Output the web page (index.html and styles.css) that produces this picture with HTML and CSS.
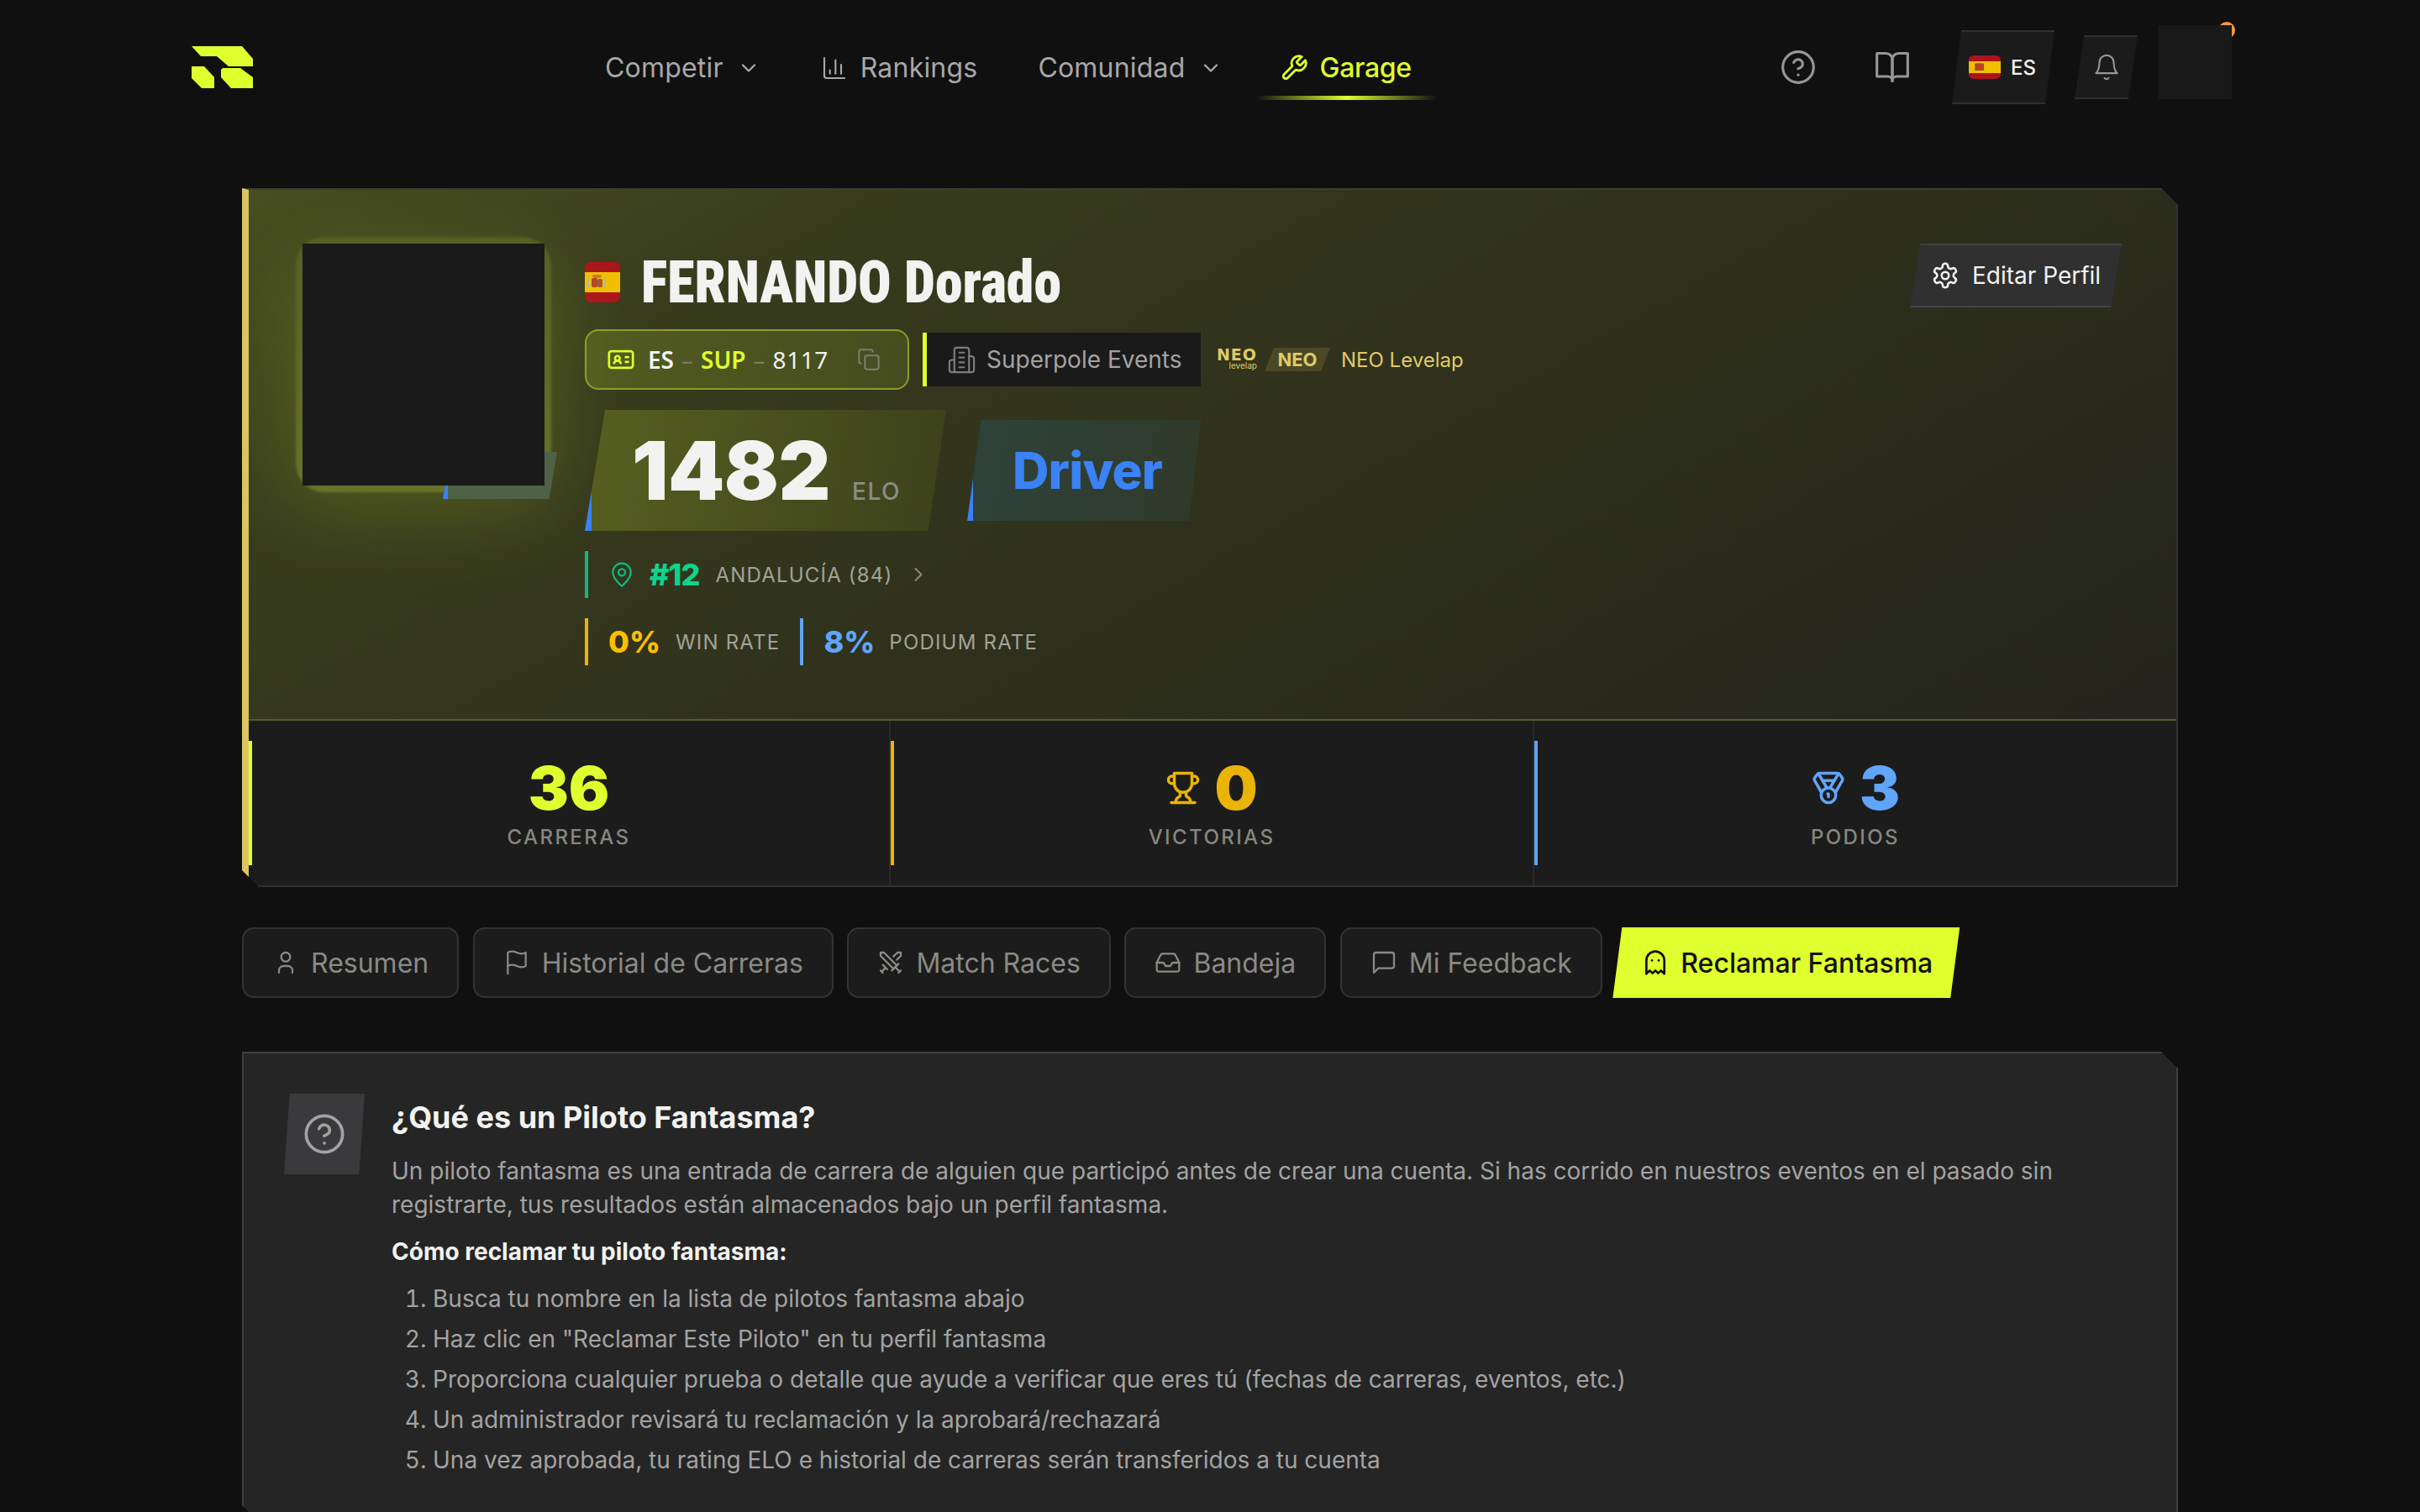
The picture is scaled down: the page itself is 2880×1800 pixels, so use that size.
FILE: index.html
```html
<!DOCTYPE html>
<html lang="es">
<head>
<meta charset="utf-8">
<title>Garage</title>
<link rel="stylesheet" href="styles.css">
</head>
<body>
<header class="topbar">
  <a class="logo" href="#">
    <svg viewBox="0 0 80 60" width="80" height="60"><path fill="#dfff2e" d="M4 5H64L77 20V29H48L34 17H15Z"/><path fill="#dfff2e" d="M41 31H62L77 42V55H51L39 42V33Z"/><path fill="#dfff2e" d="M4 29H19L31 42V55H16L4 43Z"/></svg>
  </a>
  <nav class="nav">
    <a class="nav-item" href="#">Competir<svg class="chev" viewBox="0 0 24 24"><path d="m6 9 6 6 6-6"/></svg></a>
    <a class="nav-item" href="#"><svg class="ico nav-ico" viewBox="0 0 24 24"><path d="M3 3v16a2 2 0 0 0 2 2h16"/><path d="M18 17V9"/><path d="M13 17V5"/><path d="M8 17v-3"/></svg>Rankings</a>
    <a class="nav-item" href="#">Comunidad<svg class="chev" viewBox="0 0 24 24"><path d="m6 9 6 6 6-6"/></svg></a>
    <a class="nav-item is-active" href="#"><svg class="ico nav-ico" viewBox="0 0 24 24"><path d="M14.7 6.3a1 1 0 0 0 0 1.4l1.6 1.6a1 1 0 0 0 1.4 0l3.77-3.77a6 6 0 0 1-7.94 7.94l-6.91 6.91a2.12 2.12 0 0 1-3-3l6.91-6.91a6 6 0 0 1 7.94-7.94l-3.76 3.76z"/></svg>Garage</a>
  </nav>
  <div class="tools">
    <svg class="ico tool-ico" viewBox="0 0 24 24"><circle cx="12" cy="12" r="10"/><path d="M9.09 9a3 3 0 0 1 5.83 1c0 2-3 3-3 3"/><path d="M12 17h.01"/></svg>
    <svg class="ico tool-ico book" viewBox="0 0 24 24"><path d="M2 3h6a4 4 0 0 1 4 4v14a3 3 0 0 0-3-3H2z"/><path d="M22 3h-6a4 4 0 0 0-4 4v14a3 3 0 0 1 3-3h7z"/></svg>
    <div class="lang"><svg class="lang-flag" viewBox="0 0 42 48" preserveAspectRatio="none"><rect width="42" height="48" rx="8" fill="#aa151b"/><rect y="12" width="42" height="24" fill="#f1bf00"/><rect x="8" y="16" width="12" height="15" rx="2" fill="#b5452a"/></svg><span>ES</span></div>
    <div class="bell"><svg class="ico bell-ico" viewBox="0 0 24 24"><path d="M6 8a6 6 0 0 1 12 0c0 7 3 9 3 9H3s3-2 3-9"/><path d="M10.3 21a1.94 1.94 0 0 0 3.4 0"/></svg></div>
    <div class="me"><span class="me-dot"></span><span class="me-pic"></span></div>
  </div>
</header>

<main class="page">
  <section class="hero">
    <div class="hero-top">
      <div class="portrait">
        <span class="portrait-frame"></span>
        <span class="portrait-tag"></span>
        <span class="portrait-pic"></span>
      </div>
      <div class="identity">
        <div class="name-row">
          <svg class="name-flag" viewBox="0 0 42 48">
            <rect width="42" height="48" rx="7" fill="#aa151b"/>
            <rect y="12" width="42" height="24" fill="#f1bf00"/>
            <rect x="8" y="19" width="7" height="11" rx="2" fill="#b5452a"/>
            <rect x="15" y="20" width="6" height="10" rx="2" fill="#a8552f"/>
            <rect x="9" y="15" width="11" height="4" rx="2" fill="#c8783a"/>
            <rect x="3" y="19" width="2" height="11" fill="#b9b49a"/>
            <rect x="23" y="19" width="2" height="11" fill="#b9b49a"/>
          </svg>
          <h1 class="name">FERNANDO Dorado</h1>
        </div>
        <div class="id-row">
          <div class="license">
            <svg class="ico id-ico" viewBox="0 0 24 24"><path d="M16 10h2"/><path d="M16 14h2"/><path d="M6.17 15a3 3 0 0 1 5.66 0"/><circle cx="9" cy="11" r="2"/><rect x="2" y="5" width="20" height="14" rx="2"/></svg>
            <span class="lic-a">ES</span><span class="lic-sep">–</span><span class="lic-b">SUP</span><span class="lic-sep">–</span><span class="lic-c">8117</span>
            <svg class="ico copy-ico" viewBox="0 0 24 24"><rect x="8" y="8" width="14" height="14" rx="2"/><path d="M4 16c-1.1 0-2-.9-2-2V4c0-1.1.9-2 2-2h10c1.1 0 2 .9 2 2"/></svg>
          </div>
          <div class="club">
            <svg class="ico club-ico" viewBox="0 0 24 24"><path d="M6 22V4a2 2 0 0 1 2-2h8a2 2 0 0 1 2 2v18Z"/><path d="M6 12H4a2 2 0 0 0-2 2v6a2 2 0 0 0 2 2h2"/><path d="M18 9h2a2 2 0 0 1 2 2v9a2 2 0 0 1-2 2h-2"/><path d="M10 6h4"/><path d="M10 10h4"/><path d="M10 14h4"/><path d="M10 18h4"/></svg>
            Superpole Events
          </div>
          <div class="neo">
            <span class="neo-logo"><b>NEO</b><i>levelap</i></span>
            <span class="neo-tag">NEO</span>
            <span class="neo-name">NEO Levelap</span>
          </div>
        </div>
        <div class="rating-row">
          <div class="elo"><span class="elo-num">1482</span><span class="elo-lbl">ELO</span></div>
          <div class="tier">Driver</div>
        </div>
        <div class="region">
          <svg class="ico pin" viewBox="0 0 24 24"><path d="M20 10c0 4.993-5.539 10.193-7.399 11.799a1 1 0 0 1-1.202 0C9.539 20.193 4 14.993 4 10a8 8 0 0 1 16 0"/><circle cx="12" cy="10" r="3"/></svg>
          <b>#12</b><span class="cap">ANDALUCÍA (84)</span>
          <svg class="ico region-chev" viewBox="0 0 24 24"><path d="m9 18 6-6-6-6"/></svg>
        </div>
        <div class="rates">
          <div class="rate rate-win"><b>0%</b><span class="cap">WIN RATE</span></div>
          <div class="rate rate-pod"><b>8%</b><span class="cap">PODIUM RATE</span></div>
        </div>
      </div>
      <a class="edit" href="#">
        <svg class="ico edit-ico" viewBox="0 0 24 24"><path d="M12.22 2h-.44a2 2 0 0 0-2 2v.18a2 2 0 0 1-1 1.73l-.43.25a2 2 0 0 1-2 0l-.15-.08a2 2 0 0 0-2.73.73l-.22.38a2 2 0 0 0 .73 2.73l.15.1a2 2 0 0 1 1 1.72v.51a2 2 0 0 1-1 1.74l-.15.09a2 2 0 0 0-.73 2.73l.22.38a2 2 0 0 0 2.73.73l.15-.08a2 2 0 0 1 2 0l.43.25a2 2 0 0 1 1 1.73V20a2 2 0 0 0 2 2h.44a2 2 0 0 0 2-2v-.18a2 2 0 0 1 1-1.73l.43-.25a2 2 0 0 1 2 0l.15.08a2 2 0 0 0 2.73-.73l.22-.39a2 2 0 0 0-.73-2.73l-.15-.08a2 2 0 0 1-1-1.74v-.5a2 2 0 0 1 1-1.74l.15-.09a2 2 0 0 0 .73-2.73l-.22-.38a2 2 0 0 0-2.73-.73l-.15.08a2 2 0 0 1-2 0l-.43-.25a2 2 0 0 1-1-1.73V4a2 2 0 0 0-2-2z"/><circle cx="12" cy="12" r="3"/></svg>
        Editar Perfil
      </a>
    </div>
    <div class="stats">
      <div class="stat stat-lime">
        <div class="stat-val">36</div>
        <div class="stat-lbl">CARRERAS</div>
      </div>
      <div class="stat stat-gold">
        <div class="stat-val"><svg class="ico stat-ico" viewBox="0 0 24 24"><path d="M6 9H4.5a2.5 2.5 0 0 1 0-5H6"/><path d="M18 9h1.5a2.5 2.5 0 0 0 0-5H18"/><path d="M4 22h16"/><path d="M10 14.66V17c0 .55-.47.98-.97 1.21C7.85 18.75 7 20.24 7 22"/><path d="M14 14.66V17c0 .55.47.98.97 1.21C16.15 18.75 17 20.24 17 22"/><path d="M18 2H6v7a6 6 0 0 0 12 0V2Z"/></svg>0</div>
        <div class="stat-lbl">VICTORIAS</div>
      </div>
      <div class="stat stat-blue">
        <div class="stat-val"><svg class="ico stat-ico" viewBox="0 0 24 24"><path d="M7.21 15 2.66 7.14a2 2 0 0 1 .13-2.2L4.4 2.8A2 2 0 0 1 6 2h12a2 2 0 0 1 1.6.8l1.6 2.14a2 2 0 0 1 .14 2.2L16.79 15"/><path d="M11 12 5.12 2.2"/><path d="m13 12 5.88-9.8"/><path d="M8 7h8"/><circle cx="12" cy="17" r="5"/><path d="M12 18v-2h-.5"/></svg>3</div>
        <div class="stat-lbl">PODIOS</div>
      </div>
    </div>
  </section>

  <nav class="tabs">
    <a class="tab" href="#"><svg class="ico tab-ico" viewBox="0 0 24 24"><circle cx="12" cy="7" r="4"/><path d="M6 21v-2a4 4 0 0 1 4-4h4a4 4 0 0 1 4 4v2"/></svg>Resumen</a>
    <a class="tab" href="#"><svg class="ico tab-ico" viewBox="0 0 24 24"><path d="M4 15s1-1 4-1 5 2 8 2 4-1 4-1V3s-1 1-4 1-5-2-8-2-4 1-4 1z"/><path d="M4 22v-7"/></svg>Historial de Carreras</a>
    <a class="tab" href="#"><svg class="ico tab-ico" viewBox="0 0 24 24"><path d="M14.5 17.5 3 6V3h3l11.5 11.5"/><path d="m13 19 6-6"/><path d="m16 16 4 4"/><path d="m19 21 2-2"/><path d="M14.5 6.5 18 3h3v3l-3.5 3.5"/><path d="m5 14 4 4"/><path d="m7 17-3 3"/><path d="m3 19 2 2"/></svg>Match Races</a>
    <a class="tab" href="#"><svg class="ico tab-ico" viewBox="0 0 24 24"><path d="M22 12h-6l-2 3h-4l-2-3H2"/><path d="M5.45 5.11 2 12v6a2 2 0 0 0 2 2h16a2 2 0 0 0 2-2v-6l-3.45-6.89A2 2 0 0 0 16.76 4H7.24a2 2 0 0 0-1.79 1.11z"/></svg>Bandeja</a>
    <a class="tab" href="#"><svg class="ico tab-ico" viewBox="0 0 24 24"><path d="M21 15a2 2 0 0 1-2 2H7l-4 4V5a2 2 0 0 1 2-2h14a2 2 0 0 1 2 2z"/></svg>Mi Feedback</a>
    <a class="tab tab-on" href="#"><svg class="ico tab-ico" viewBox="0 0 24 24"><path d="M9 10h.01"/><path d="M15 10h.01"/><path d="M12 2a8 8 0 0 0-8 8v12l3-3 2.5 2.5L12 19l2.5 2.5L17 19l3 3V10a8 8 0 0 0-8-8z"/></svg>Reclamar Fantasma</a>
  </nav>

  <section class="info">
    <div class="info-badge"><svg class="ico info-ico" viewBox="0 0 24 24"><circle cx="12" cy="12" r="10"/><path d="M9.09 9a3 3 0 0 1 5.83 1c0 2-3 3-3 3"/><path d="M12 17h.01"/></svg></div>
    <div class="info-body">
      <h2 class="info-title">¿Qué es un Piloto Fantasma?</h2>
      <p class="info-text">Un piloto fantasma es una entrada de carrera de alguien que participó antes de crear una cuenta. Si has corrido en nuestros eventos en el pasado sin registrarte, tus resultados están almacenados bajo un perfil fantasma.</p>
      <p class="info-sub">Cómo reclamar tu piloto fantasma:</p>
      <ol class="info-list">
        <li>Busca tu nombre en la lista de pilotos fantasma abajo</li>
        <li>Haz clic en "Reclamar Este Piloto" en tu perfil fantasma</li>
        <li>Proporciona cualquier prueba o detalle que ayude a verificar que eres tú (fechas de carreras, eventos, etc.)</li>
        <li>Un administrador revisará tu reclamación y la aprobará/rechazará</li>
        <li>Una vez aprobada, tu rating ELO e historial de carreras serán transferidos a tu cuenta</li>
      </ol>
    </div>
  </section>
</main>
</body>
</html>
```
FILE: styles.css
```css
* { box-sizing: border-box; }
html, body { margin: 0; padding: 0; background: #101010; }
body { font-family: Inter, "Liberation Sans", sans-serif; color: #f2f2f0; }
a { color: inherit; text-decoration: none; }
h1, h2, p { margin: 0; }

.ico { fill: none; stroke: currentColor; stroke-width: 2; stroke-linecap: round; stroke-linejoin: round; flex: none; display: block; }

/* top bar */
.topbar { height: 160px; padding: 0 224px; display: flex; align-items: center; }
.logo { display: block; width: 80px; height: 60px; margin-right: 416px; }
.logo svg { display: block; }
.nav { display: flex; align-items: center; gap: 72px; font-size: 32px; letter-spacing: .2px; color: #a8a8a8; padding-top: 2px; }
.nav-item { position: relative; display: flex; align-items: center; height: 64px; line-height: 64px; }
.chev { width: 28px; height: 28px; margin-left: 16px; fill: none; stroke: currentColor; stroke-width: 2; stroke-linecap: round; stroke-linejoin: round; }
.nav-ico { width: 32px; height: 32px; margin-right: 15px; stroke-width: 1.6; }
.nav-item.is-active { color: #dfff2e; font-weight: 500; letter-spacing: -.3px; margin-left: -4px; }
.nav-item.is-active .nav-ico { width: 34px; height: 34px; margin-right: 14px; stroke-width: 2; }
.nav-item.is-active::after { content: ""; position: absolute; left: -28px; right: -30px; bottom: -6px; height: 5px; background: linear-gradient(90deg, transparent, #dfff2e 50%, transparent); }

.tools { margin-left: auto; display: flex; align-items: center; color: #969696; }
.tool-ico { width: 44px; height: 44px; stroke-width: 1.7; margin-right: 68px; }
.tool-ico.book { margin-right: 49px; }
.lang { width: 122px; height: 88px; display: flex; align-items: center; gap: 12px; padding-left: 20px; background: #1b1b1b; border-top: 2px solid #303030; border-bottom: 2px solid #303030; clip-path: polygon(9% 0, 100% 0, 91% 100%, 0 100%); color: #f2f2f0; font-size: 24px; font-weight: 500; margin-right: 24px; }
.lang-flag { width: 38px; height: 28px; flex: none; }
.bell { width: 75px; height: 76px; display: flex; align-items: center; justify-content: center; background: #1b1b1b; border-top: 2px solid #303030; border-bottom: 2px solid #303030; clip-path: polygon(15% 0, 100% 0, 85% 100%, 0 100%); margin-right: 24px; }
.bell-ico { width: 34px; height: 34px; stroke-width: 1.5; }
.me { position: relative; width: 88px; height: 88px; margin-top: -12px; }
.me-pic { position: absolute; inset: 0; background: #191919; }
.me-dot { position: absolute; right: -4px; top: -4px; width: 20px; height: 20px; border-radius: 50%; background: #f59842; }

/* page */
.page { padding: 64px 288px 0; }

/* hero */
.hero { background: #1c1c1c; border-top: 2px solid #3b3e2e; border-right: 2px solid #333; border-bottom: 2px solid #333; border-left: 8px solid #dcc462; clip-path: polygon(0 0, calc(100% - 20px) 0, 100% 20px, 100% 100%, 20px 100%, 0 calc(100% - 20px)); }
.hero-top { display: flex; align-items: flex-start; padding: 64px 65px 64px 64px; background: linear-gradient(150deg, #474e20 0%, #383c1d 22%, #2f311c 52%, #24241c 100%); border-bottom: 2px solid #565b32; height: 632px; }

.portrait { position: relative; width: 288px; height: 288px; flex: none; margin-right: 48px; }
.portrait-glow { display: none; }
.portrait::before { content: ""; position: absolute; left: -20px; right: -20px; top: 20px; bottom: -40px; border-radius: 60px; background: rgba(223, 255, 46, .14); filter: blur(45px); }
.portrait-frame { position: absolute; left: -8px; right: -8px; top: -8px; bottom: -8px; border-radius: 34px; background: linear-gradient(180deg, #565f22, #68722a); filter: blur(1.5px); }
.portrait-tag { position: absolute; left: 167px; width: 136px; top: 248px; height: 56px; background: #4f6248; clip-path: polygon(7% 0, 100% 0, 93% 100%, 0 100%); border-left: 6px solid #3b82f6; }
.portrait-pic { position: absolute; inset: 0; background: #1a1a1a; }

.identity { flex: 1; display: flex; flex-direction: column; gap: 24px; padding-top: 10px; min-width: 0; }
.name-row { height: 68px; display: flex; align-items: center; gap: 25px; }
.name-flag { width: 42px; height: 48px; flex: none; margin-top: 4px; }
.name { font-family: "Roboto Condensed", "Liberation Sans Narrow", Roboto, sans-serif; font-size: 70px; font-weight: 900; line-height: 70px; padding-top: 4px; color: #f2f2f0; transform: scaleX(.94); transform-origin: left center; white-space: nowrap; }

.id-row { height: 72px; display: flex; align-items: center; }
.license { width: 386px; height: 72px; display: flex; align-items: center; padding-left: 24px; border: 2px solid #8c9c2c; border-radius: 16px; background: linear-gradient(100deg, #525c20, #454c1f); font-family: "Noto Sans", sans-serif; font-size: 28px; font-weight: 600; margin-right: 16px; }
.id-ico { width: 34px; height: 34px; color: #dfff2e; margin-right: 15px; stroke-width: 1.9; }
.lic-sep { color: #7a7a6a; margin: 0 9px; font-weight: 400; }
.lic-b { color: #dfff2e; }
.lic-c { font-weight: 400; letter-spacing: .5px; }
.copy-ico { width: 28px; height: 28px; margin-left: 34px; color: #7c7f70; stroke-width: 1.7; }
.club { height: 64px; width: 331px; display: flex; align-items: center; gap: 12px; padding-left: 24px; background: #1a1a1a; border-left: 5px solid #dfff2e; font-size: 28px; color: #a3a3a3; margin-right: 17px; }
.club-ico { width: 35px; height: 35px; color: #7c7c7c; stroke-width: 1.5; }
.neo { display: flex; align-items: center; color: #e0c968; }
.neo-logo { display: flex; flex-direction: column; align-items: flex-end; width: 50px; margin-right: 9px; line-height: 1; }
.neo-logo b { font-family: "DejaVu Sans", sans-serif; font-size: 19px; font-weight: 700; letter-spacing: 1px; line-height: 15px; }
.neo-logo i { font-style: normal; font-size: 10px; line-height: 11px; }
.neo-tag { width: 78px; height: 28px; margin-right: 13px; display: flex; align-items: center; justify-content: center; font-size: 22px; font-weight: 700; background: #4a4826; clip-path: polygon(14% 0, 100% 0, 86% 100%, 0 100%); }
.neo-name { font-size: 24px; }

.rating-row { display: flex; align-items: center; gap: 25px; }
.elo { width: 430px; height: 144px; display: flex; align-items: flex-end; padding: 0 0 32px 48px; border-left: 8px solid #3b82f6; background: linear-gradient(100deg, #565f20, #3c411c); clip-path: polygon(5.6% 0, 100% 0, 95% 100%, 0 100%); }
.elo-num { font-size: 96px; font-weight: 900; line-height: 80px; letter-spacing: -.5px; color: #f2f2f0; }
.elo-lbl { font-size: 28px; font-weight: 500; line-height: 30px; letter-spacing: 1.5px; color: #8c8c84; margin-left: 26px; }
.tier { width: 278px; height: 120px; display: flex; align-items: center; padding-left: 47px; border-left: 7px solid #3b82f6; background: linear-gradient(100deg, #2f423a, #303a2a); clip-path: polygon(6% 0, 100% 0, 95% 100%, 0 100%); font-size: 60px; font-weight: 800; letter-spacing: -.8px; color: #3b82f6; }

.cap { font-size: 24px; letter-spacing: 1.2px; color: #a3a398; }
.region { height: 56px; display: flex; align-items: center; border-left: 4px solid #10b981; padding-left: 24px; }
.pin { width: 32px; height: 32px; color: #10b981; stroke-width: 1.7; margin-right: 17px; }
.region b { font-size: 36px; font-weight: 800; color: #0fd38c; letter-spacing: -1px; margin-right: 19px; }
.region-chev { width: 28px; height: 28px; margin-left: 16px; color: #8a8a80; stroke-width: 1.7; }
.rates { display: flex; }
.rate { height: 56px; display: flex; align-items: center; gap: 18px; border-left: 4px solid; padding-left: 24px; margin-right: 24px; }
.rate b { font-size: 36px; font-weight: 800; }
.rate-win { border-color: #eab308; }
.rate-win b { color: #fbbf00; }
.rate-pod { border-color: #60a5fa; gap: 17px; }
.rate-pod b { color: #60a5fa; }

.edit { flex: none; width: 252px; height: 76px; margin-left: auto; display: flex; align-items: center; gap: 15px; padding-left: 25px; font-size: 28px; color: #f2f2f0; background: #303030; border-top: 2px solid #434343; border-bottom: 2px solid #434343; clip-path: polygon(5% 0, 100% 0, 95% 100%, 0 100%); }
.edit-ico { width: 34px; height: 34px; stroke-width: 1.8; }

/* stats */
.stats { display: grid; grid-template-columns: 762px 766px 1fr; }
.stat { position: relative; padding: 40px 0 39px; text-align: center; border-left: 2px solid #2a2a2a; }
.stat:first-child { border-left: 0; }
.stat::before { content: ""; position: absolute; left: 0; top: 24px; bottom: 24px; width: 4px; background: currentColor; }
.stat-val { height: 80px; display: flex; align-items: center; justify-content: center; gap: 16px; font-size: 72px; font-weight: 900; line-height: 80px; }
.stat-lbl { margin-top: 1px; font-size: 24px; line-height: 36px; font-weight: 500; letter-spacing: 2.4px; color: #87877f; }
.stat-ico { width: 42px; height: 42px; stroke-width: 2; }
.stat-lime { color: #dfff2e; }
.stat-gold { color: #eab308; }
.stat-blue { color: #60a5fa; }

/* tabs */
.tabs { display: flex; gap: 16.6px; margin-top: 48px; }
.tab { height: 84px; display: flex; align-items: center; gap: 14px; padding: 0 34px; font-size: 32px; color: #8a8a85; background: #1c1c1c; border: 2px solid #333; border-radius: 14px; }
.tab-ico { width: 32px; height: 32px; stroke-width: 1.7; }
.tab-on { background: #dfff2e; border: 0; border-radius: 0; color: #111; font-weight: 500; clip-path: polygon(11px 0, 100% 0, calc(100% - 11px) 100%, 0 100%); padding: 0 32px 0 35px; margin-left: -4px; }
.tab-on .tab-ico { stroke-width: 2; }

/* info */
.info { margin-top: 64px; display: flex; gap: 32px; padding: 48px; background: #252525; border: 2px solid #3f3f3f; clip-path: polygon(0 0, calc(100% - 20px) 0, 100% 20px, 100% 100%, 20px 100%, 0 calc(100% - 20px)); }
.info-badge { width: 96px; height: 96px; flex: none; display: flex; align-items: center; justify-content: center; background: #3a3a3c; clip-path: polygon(7% 0, 100% 0, 93% 100%, 0 100%); color: #a3a3a3; }
.info-ico { width: 52px; height: 52px; stroke-width: 1.7; }
.info-body { flex: 1; min-width: 0; }
.info-title { font-size: 36px; font-weight: 700; line-height: 56px; color: #f2f2f0; }
.info-text { font-size: 28px; line-height: 40px; color: #a3a3a3; margin-top: 16px; }
.info-sub { font-size: 28px; font-weight: 700; line-height: 40px; color: #f2f2f0; margin-top: 16px; }
.info-list { margin: 12px 0 0; padding: 0 0 0 49px; font-size: 28px; line-height: 48px; color: #a3a3a3; }
```
